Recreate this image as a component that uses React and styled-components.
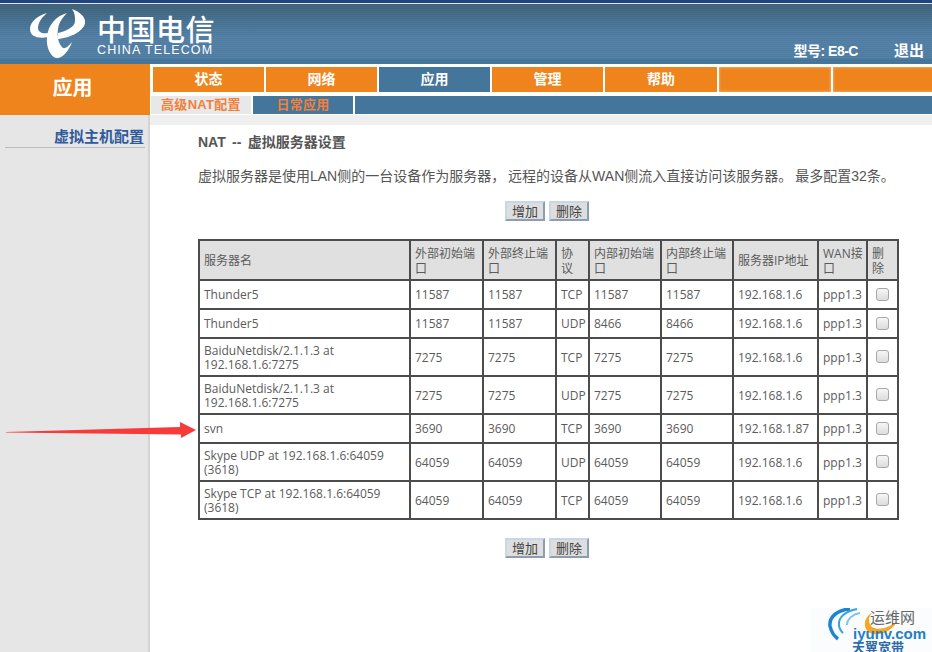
import React from "react";
import styled, { createGlobalStyle } from "styled-components";

const Global = createGlobalStyle`
  html, body { margin: 0; padding: 0; background: #fff; }
  body { font-family: "Liberation Sans", "Noto Sans CJK SC", sans-serif; color: #555; overflow: hidden; }
  * { box-sizing: border-box; }
`;

const Page = styled.div`
  position: relative;
  width: 932px;
  height: 652px;
  overflow: hidden;
`;
const TopLine = styled.div`
  height: 4px;
  background: #1f4480;
  border-bottom: 1px solid #dfe6ee;
`;
const Banner = styled.header`
  height: 60px;
  display: flex;
  align-items: flex-start;
  justify-content: space-between;
  padding: 0 8px 0 30px;
  background:
    repeating-linear-gradient(0deg, rgba(255,255,255,.025) 0 1px, rgba(0,0,0,.025) 1px 2px),
    linear-gradient(180deg, #3d6279 0, #456f8e 14px, #527fa6 34px, #507ea4 54px, #507ea4 55px, #44759a 55px, #44759a 60px);
`;
const Brand = styled.div`
  display: flex;
  align-items: flex-start;
`;
const LogoMark = styled.svg`
  display: block;
  margin-top: 4px;
  flex: none;
`;
const BrandText = styled.div`
  display: flex;
  flex-direction: column;
  margin: 9px 0 0 11px;
  color: #fff;
`;
const BrandCn = styled.span`
  font-family: "Noto Sans CJK SC", sans-serif;
  font-weight: 500;
  font-size: 29px;
  letter-spacing: 0.5px;
  line-height: 30px;
  white-space: nowrap;
`;
const BrandEn = styled.span`
  font-size: 12.5px;
  letter-spacing: 1.1px;
  line-height: 12px;
  white-space: nowrap;
  margin-top: 1px;
`;
const Account = styled.div`
  display: flex;
  align-items: center;
  gap: 36px;
  margin-top: 38px;
  color: #fff;
  font-weight: 700;
  font-size: 14px;
  line-height: 18px;
`;
const Model = styled.span`
  letter-spacing: -0.5px;
`;
const Logout = styled.span`
  font-size: 15px;
`;
const Body = styled.div`
  display: grid;
  grid-template-columns: 150px 1fr;
  height: 588px;
`;
const Side = styled.aside`
  display: flex;
  flex-direction: column;
`;
const SideTitle = styled.div`
  height: 51px;
  padding-right: 5px;
  background: #f0841c;
  color: #fff;
  font-size: 20px;
  font-weight: 700;
  text-align: center;
  line-height: 48px;
`;
const SideMenu = styled.nav`
  flex: 1;
  background: #e6e6e6;
  border-right: 2px solid #d4d4d4;
  padding: 13px 3px 0 5px;
`;
const SideLink = styled.div`
  color: #2f5a9c;
  font-size: 15px;
  font-weight: 700;
  line-height: 18px;
  text-align: right;
  padding-right: 1px;
  border-bottom: 1px solid #bbb;
  height: 20px;
`;
const Main = styled.main`
  display: flex;
  flex-direction: column;
  min-width: 0;
`;
const Tabs = styled.nav`
  display: flex;
  gap: 2px;
  padding: 3px 0 0 3px;
`;
const Tab = styled.div`
  flex: 0 0 ${(p) => p.$w}px;
  height: 25px;
  line-height: 25px;
  text-align: center;
  color: #fff;
  font-size: 14px;
  font-weight: 700;
  background: ${(p) => (p.$active ? "#44759a" : "#f0841c")};
  box-shadow: ${(p) => (p.$blank ? "inset 0 0 3px #f6c08e" : "none")};
`;
const SubTabs = styled.nav`
  display: flex;
  gap: 2px;
  padding: 4px 0 0 1px;
`;
const SubTab = styled.div`
  flex: ${(p) => (p.$w ? `0 0 ${p.$w}px` : "1")};
  height: 18px;
  line-height: 18px;
  text-align: center;
  color: #f0803a;
  font-size: 13px;
  letter-spacing: 0.3px;
  font-weight: 700;
  background: ${(p) => (p.$active ? "#e8e8e8" : "#44759a")};
`;
const Strip = styled.div`
  height: 10px;
  margin-top: 1px;
  background: #eeefee;
`;
const Content = styled.section`
  padding: 8px 0 0 48px;
`;
const Title = styled.h1`
  margin: 0;
  font-size: 14px;
  line-height: 18px;
  font-weight: 700;
  word-spacing: 2.5px;
  color: #555;
`;
const Desc = styled.p`
  margin: 16px 0 0;
  font-size: 14px;
  line-height: 18px;
  word-spacing: -1px;
  color: #555;
  white-space: nowrap;
`;
const Actions = styled.div`
  width: 698px;
  display: flex;
  justify-content: center;
  gap: 4px;
  margin-top: ${(p) => p.$top}px;
`;
const Btn = styled.button`
  width: 40px;
  height: 20px;
  padding: 0;
  font: 13px/16px "Noto Sans CJK SC", sans-serif;
  color: #444;
  background: #dedede;
  border: 2px solid;
  border-color: #c8d6ea #8d9caf #8d9caf #c8d6ea;
`;
const Table = styled.table`
  table-layout: fixed;
  width: 699px;
  margin-top: 18px;
  border-collapse: collapse;
  border: 2px solid #4c4c4c;
  font-family: "Open Sans", "Noto Sans CJK SC", sans-serif;
  font-size: 12px;
  line-height: 14px;
  color: #5b5b5b;
`;
const Th = styled.th`
  height: 40px;
  padding: ${(p) => (p.$tight ? "1px 0 0 4px" : "1px 4px 0 4px")};
  text-align: left;
  font-weight: 400;
  line-height: 15px;
  word-break: break-all;
  background: #e0e0e0;
  border: 2px solid #4c4c4c;
  overflow: hidden;
`;
const Row = styled.tr`
  height: ${(p) => p.$h}px;
`;
const Td = styled.td`
  padding: ${(p) => (p.$center ? "1px 1px 0" : "1px 1px 0 4px")};
  border: 2px solid #4c4c4c;
  background: #fff;
  white-space: ${(p) => (p.$wrap ? "normal" : "nowrap")};
  text-align: ${(p) => (p.$center ? "center" : "left")};
  overflow: hidden;
`;
const Check = styled.input`
  appearance: none;
  display: block;
  width: 13px;
  height: 13px;
  margin: 0 auto 2px;
  border: 1px solid #a8a8a8;
  border-radius: 3px;
  background: linear-gradient(180deg, #f6f6f6, #dcdcdc);
`;
const ArrowMark = styled.svg`
  position: absolute;
  left: 0;
  top: 415px;
`;
const Watermark = styled.div`
  position: absolute;
  right: 0;
  bottom: 0;
  width: 122px;
  height: 44px;
  overflow: hidden;
  background: rgba(250, 252, 254, 0.9);
`;
const WmSwirl = styled.svg`
  position: absolute;
  left: 0;
  top: 0;
`;
const WmCn = styled.span`
  position: absolute;
  left: 60px;
  top: 0;
  font: 400 15px/17px "Noto Sans CJK SC", sans-serif;
  color: #666;
  white-space: nowrap;
`;
const WmUrl = styled.span`
  position: absolute;
  left: 43px;
  top: 18px;
  font: 700 15px/16px "Liberation Sans", sans-serif;
  color: #1f7fc4;
  white-space: nowrap;
`;
const WmBrand = styled.span`
  position: absolute;
  left: 42px;
  top: 31px;
  font: 700 13px/16px "Noto Sans CJK SC", sans-serif;
  color: #2c6aa8;
  white-space: nowrap;
`;

const tabs = [
  ["状态", 111], ["网络", 111], ["应用", 111, true], ["管理", 111], ["帮助", 112],
  ["", 112, false, true], ["", 112, false, true],
];
const cols = [211, 73, 73, 33, 72, 72, 85, 49, 31];
const heads = ["服务器名", "外部初始端口", "外部终止端口", "协议", "内部初始端口", "内部终止端口", "服务器IP地址", "WAN接口", "删除"];
const rows = [
  ["Thunder5", "11587", "11587", "TCP", "11587", "11587", "192.168.1.6", 29],
  ["Thunder5", "11587", "11587", "UDP", "8466", "8466", "192.168.1.6", 29],
  ["BaiduNetdisk/2.1.1.3 at 192.168.1.6:7275", "7275", "7275", "TCP", "7275", "7275", "192.168.1.6", 38],
  ["BaiduNetdisk/2.1.1.3 at 192.168.1.6:7275", "7275", "7275", "UDP", "7275", "7275", "192.168.1.6", 38],
  ["svn", "3690", "3690", "TCP", "3690", "3690", "192.168.1.87", 29],
  ["Skype UDP at 192.168.1.6:64059 (3618)", "64059", "64059", "UDP", "64059", "64059", "192.168.1.6", 38],
  ["Skype TCP at 192.168.1.6:64059 (3618)", "64059", "64059", "TCP", "64059", "64059", "192.168.1.6", 38],
];

const TelecomLogo = () => (
  <LogoMark width="56" height="52" viewBox="30 8 56 52" fill="#fff" aria-hidden="true">
    <path d="M47 13C37 16 30 22 30 29C30 37 39 39 48 37L48 33C42 34 38 32 38 28C38 23 41 18 47 13Z" />
    <path d="M72 9C80 12 86 17 85 23C84 31 70 38 58 39L58 33C66 31 75 27 75 21C75 17 75 13 72 9Z" />
    <path d="M67 13C56 16 48 25 47 37C46 47 50 56 56 58C62 59 69 51 72 42C68 47 64 50 62 47C58 43 57 35 58 29C59 22 63 17 67 13Z" />
  </LogoMark>
);

export default function App() {
  return (
    <Page>
      <Global />
      <TopLine />
      <Banner>
        <Brand>
          <TelecomLogo />
          <BrandText>
            <BrandCn>中国电信</BrandCn>
            <BrandEn>CHINA TELECOM</BrandEn>
          </BrandText>
        </Brand>
        <Account>
          <Model>型号: E8-C</Model>
          <Logout>退出</Logout>
        </Account>
      </Banner>
      <Body>
        <Side>
          <SideTitle>应用</SideTitle>
          <SideMenu>
            <SideLink>虚拟主机配置</SideLink>
          </SideMenu>
        </Side>
        <Main>
          <Tabs>
            {tabs.map(([label, w, active, blank], i) => (
              <Tab key={i} $w={w} $active={active} $blank={blank}>{label}</Tab>
            ))}
          </Tabs>
          <SubTabs>
            <SubTab $w={100} $active>高级NAT配置</SubTab>
            <SubTab $w={100}>日常应用</SubTab>
            <SubTab />
          </SubTabs>
          <Strip />
          <Content>
            <Title>NAT -- 虚拟服务器设置</Title>
            <Desc>虚拟服务器是使用LAN侧的一台设备作为服务器， 远程的设备从WAN侧流入直接访问该服务器。 最多配置32条。</Desc>
            <Actions $top={16}><Btn>增加</Btn><Btn>删除</Btn></Actions>
            <Table>
              <colgroup>
                {cols.map((w, i) => <col key={i} style={{ width: w }} />)}
              </colgroup>
              <thead>
                <tr>{heads.map((h) => <Th key={h} $tight={h === "WAN接口"}>{h}</Th>)}</tr>
              </thead>
              <tbody>
                {rows.map((r, i) => (
                  <Row key={i} $h={r[7]}>
                    <Td $wrap>{r[0]}</Td>
                    {r.slice(1, 7).map((c, j) => <Td key={j}>{c}</Td>)}
                    <Td>ppp1.3</Td>
                    <Td $center><Check type="checkbox" /></Td>
                  </Row>
                ))}
              </tbody>
            </Table>
            <Actions $top={18}><Btn>增加</Btn><Btn>删除</Btn></Actions>
          </Content>
        </Main>
      </Body>
      <ArrowMark width="200" height="30" viewBox="0 0 200 30" aria-hidden="true">
        <path d="M6 17L6 17.6L181 19.5L181 23L196 15L180 7L180 12Z" fill="#f73a3a" />
      </ArrowMark>
      <Watermark>
        <WmSwirl width="122" height="44" viewBox="0 0 122 44" fill="none" aria-hidden="true">
          <path d="M40 1C26 2 19 10 20 18C21 23 24 28 28 31" stroke="#1b86cf" strokeWidth="3.5" />
          <path d="M47 1C36 3 28 9 29 17C29 20 31 23 33 25" stroke="#35a3dd" strokeWidth="2" />
          <path d="M50 5C43 6 37 11 37 17" stroke="#7cc4ea" strokeWidth="2" />
          <path d="M62 5C54 9 52 20 60 25C68 29 82 24 88 12C80 20 68 23 62 19C58 15 58 9 62 5Z" fill="#f5a623" />
        </WmSwirl>
        <WmCn>运维网</WmCn>
        <WmUrl>iyunv.com</WmUrl>
        <WmBrand>天翼宽带</WmBrand>
      </Watermark>
    </Page>
  );
}
